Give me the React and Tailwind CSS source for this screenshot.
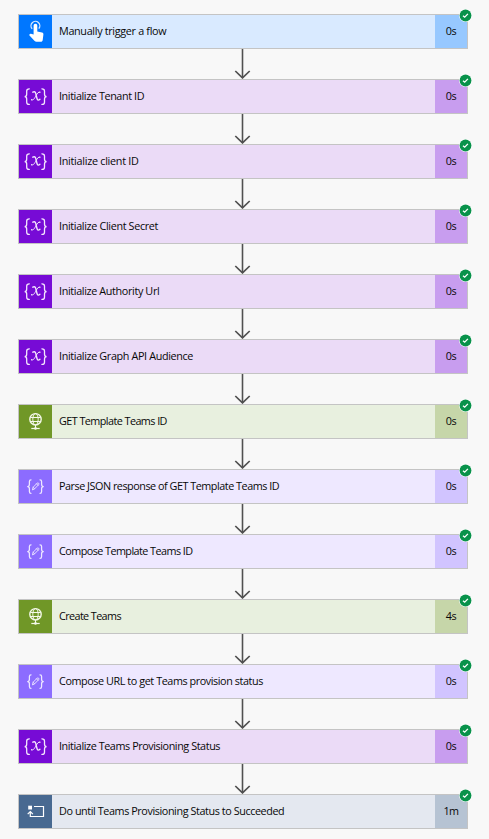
import React from "react";

const themes = {
  trigger: { icon: "bg-[#0077ff]", body: "bg-[#d9eaff]", time: "bg-[#97c8ff]" },
  variable: { icon: "bg-[#770bd6]", body: "bg-[#ebdbf7]", time: "bg-[#c89def]" },
  http: { icon: "bg-[#709727]", body: "bg-[#e8f0df]", time: "bg-[#c6d6a9]" },
  data: { icon: "bg-[#8c6cff]", body: "bg-[#eee8ff]", time: "bg-[#d1c4ff]" },
  loop: { icon: "bg-[#486991]", body: "bg-[#e4e8f0]", time: "bg-[#b6c3d3]" },
};

const steps = [
  ["trigger", "Manually trigger a flow", "0s", "tracking-[-0.32px]"],
  ["variable", "Initialize Tenant ID", "0s", "tracking-[-0.4px]"],
  ["variable", "Initialize client ID", "0s", "tracking-[-0.28px]"],
  ["variable", "Initialize Client Secret", "0s", "tracking-[-0.35px]"],
  ["variable", "Initialize Authority Url", "0s", "tracking-[-0.36px]"],
  ["variable", "Initialize Graph API Audience", "0s", "tracking-[-0.36px]"],
  ["http", "GET Template Teams ID", "0s", "tracking-[-0.55px]"],
  ["data", "Parse JSON response of GET Template Teams ID", "0s", "tracking-[-0.47px]"],
  ["data", "Compose Template Teams ID", "0s", "tracking-[-0.55px]"],
  ["http", "Create Teams", "4s", "tracking-[-0.6px]"],
  ["data", "Compose URL to get Teams provision status", "0s", "tracking-[-0.42px]"],
  ["variable", "Initialize Teams Provisioning Status", "0s", "tracking-[-0.42px]"],
  ["loop", "Do until Teams Provisioning Status to Succeeded", "1m", "tracking-[-0.41px]"],
];

function StepIcon({ kind }) {
  if (kind === "variable") {
    return (
      <svg width="33" height="33" viewBox="0 0 33 33" fill="none" stroke="#f3e6fd" strokeLinecap="round">
        <path d="M10.300 8.800C8.300 8.800 7.700 9.700 7.700 11v3.200c0 1.500-.6 2.400-2.100 2.400 1.500 0 2.100.9 2.100 2.400v3.200c0 1.400.6 2.200 2.600 2.200M22.900 8.800c2 0 2.600.9 2.600 2.200v3.200c0 1.500.6 2.400 2.100 2.400-1.500 0-2.100.9-2.100 2.400v3.200c0 1.400-.6 2.200-2.600 2.200" strokeWidth="1.300" />
        <path d="M13.800 12.200c1.600-1 2.600-.3 3 1.400l1.200 4.900c.4 1.700 1.400 2.200 2.900.7" strokeWidth="1.400" />
        <path d="M21 12c-1.500-.4-2.700 1.200-4 3.700-1.400 2.700-2.600 4.900-4.500 4.200" strokeWidth="1" />
        <circle cx="20.800" cy="12.300" r=".6" fill="#f3e6fd" stroke="none" />
        <circle cx="12.700" cy="19.700" r=".6" fill="#f3e6fd" stroke="none" />
      </svg>
    );
  }
  if (kind === "trigger") {
    return (
      <svg width="33" height="33" viewBox="0 0 33 33" fill="none">
        <path d="M13.200 13.800a4.400 4.400 0 1 1 6.600-.2" stroke="#d9eaff" strokeWidth="1.300" />
        <path d="M14.600 10.500a1.850 1.850 0 0 1 3.700 0v5.900l4.700 1.200c1.100.3 1.500.9 1.400 1.900l-.7 5.400c-.1 1.200-.8 1.800-1.900 1.800h-4.300c-.9 0-1.500-.3-2.100-1l-4.900-5.200c-.7-.8.3-2.100 1.500-1.800l2.600.8z" fill="white" />
      </svg>
    );
  }
  if (kind === "http") {
    return (
      <svg width="33" height="33" viewBox="0 0 33 33" fill="none" stroke="#f4f8ea" strokeWidth="1">
        <circle cx="16.500" cy="14.300" r="5.700" strokeWidth="1.400" />
        <ellipse cx="16.500" cy="14.300" rx="2.700" ry="5.700" />
        <path d="M11.300 12.500h10.400M11.300 16.500h10.400M16.500 20v3.500" />
        <path d="M12.300 23.500h8.400" strokeWidth="1.200" />
        <circle cx="16.500" cy="23.400" r="1.300" fill="#f4f8ea" stroke="none" />
      </svg>
    );
  }
  if (kind === "data") {
    return (
      <svg width="33" height="33" viewBox="0 0 33 33" fill="none" stroke="#eee8ff" strokeLinecap="round" strokeLinejoin="round">
        <path d="M12 9.800c-1.300 0-1.600.7-1.600 1.800v2.700c0 1.300-.5 2.200-1.700 2.200 1.200 0 1.700.9 1.700 2.200v2.700c0 1.200.3 1.900 1.600 1.900M21 9.800c1.300 0 1.600.7 1.600 1.800v2.700c0 1.300.5 2.200 1.700 2.200-1.200 0-1.700.9-1.700 2.200v2.700c0 1.200-.3 1.900-1.600 1.900" strokeWidth="1.250" />
        <path d="m13.500 19.500.6-2.200 4.100-4.200c.9-.8 2.300.5 1.500 1.500l-4.100 4.200zM17.500 13.800l1.500 1.500M14.100 17.300l1.500 1.500" strokeWidth=".9" />
      </svg>
    );
  }
  return (
    <svg width="33" height="33" viewBox="0 0 33 33" fill="none" stroke="white">
      <path d="M9.200 10.700H13v3.800H9.200z" fill="white" stroke="none" />
      <path d="M15 11.500h9.500v10H11.300v-4.500M8.700 19.200l2.600-2.600 2.600 2.600" strokeWidth="1.200" />
    </svg>
  );
}

function Arrow() {
  return (
    <svg className="ml-[216px] block" width="17" height="30" viewBox="0 0 17 30" fill="none" stroke="#505050">
      <path d="M8.500 0v29" strokeWidth="1.600" />
      <path d="m1.300 22 7.200 6.900 7.200-6.900" strokeWidth="1.700" />
    </svg>
  );
}

function Step({ step }) {
  const [kind, label, time, tracking] = step;
  const theme = themes[kind];
  return (
    <div className={`relative flex h-[35px] w-[450px] border border-[#c4c4c4] ${theme.body}`}>
      <div className={`h-[33px] w-[33px] shrink-0 ${theme.icon}`}>
        <StepIcon kind={kind} />
      </div>
      <div className="flex flex-1 items-center pb-0.5 pl-[7px]">
        <span className={`whitespace-nowrap ${tracking}`}>{label}</span>
      </div>
      <div className={`flex w-8 items-center justify-center pb-0.5 tracking-[-0.5px] ${theme.time}`}>{time}</div>
      <svg className="absolute -top-[6px] -right-[5px]" width="13" height="13" viewBox="0 0 13 13">
        <circle cx="6.500" cy="6.500" r="6.500" fill="white" />
        <circle cx="6.500" cy="6.500" r="5.900" fill="#08924a" />
        <path d="m4 6.700 1.700 1.500 3.200-3.300" fill="none" stroke="white" strokeWidth="1.300" />
      </svg>
    </div>
  );
}

export default function App() {
  return (
    <main className="h-[839px] w-[489px] overflow-hidden bg-[#f8f8f8] pt-[14px] pl-[18px] font-['Open_Sans','Noto_Sans',sans-serif] text-[10.8px] leading-4 text-[#080808]">
      {steps.map((step, index) => (
        <React.Fragment key={step[1]}>
          {index > 0 && <Arrow />}
          <Step step={step} />
        </React.Fragment>
      ))}
    </main>
  );
}
